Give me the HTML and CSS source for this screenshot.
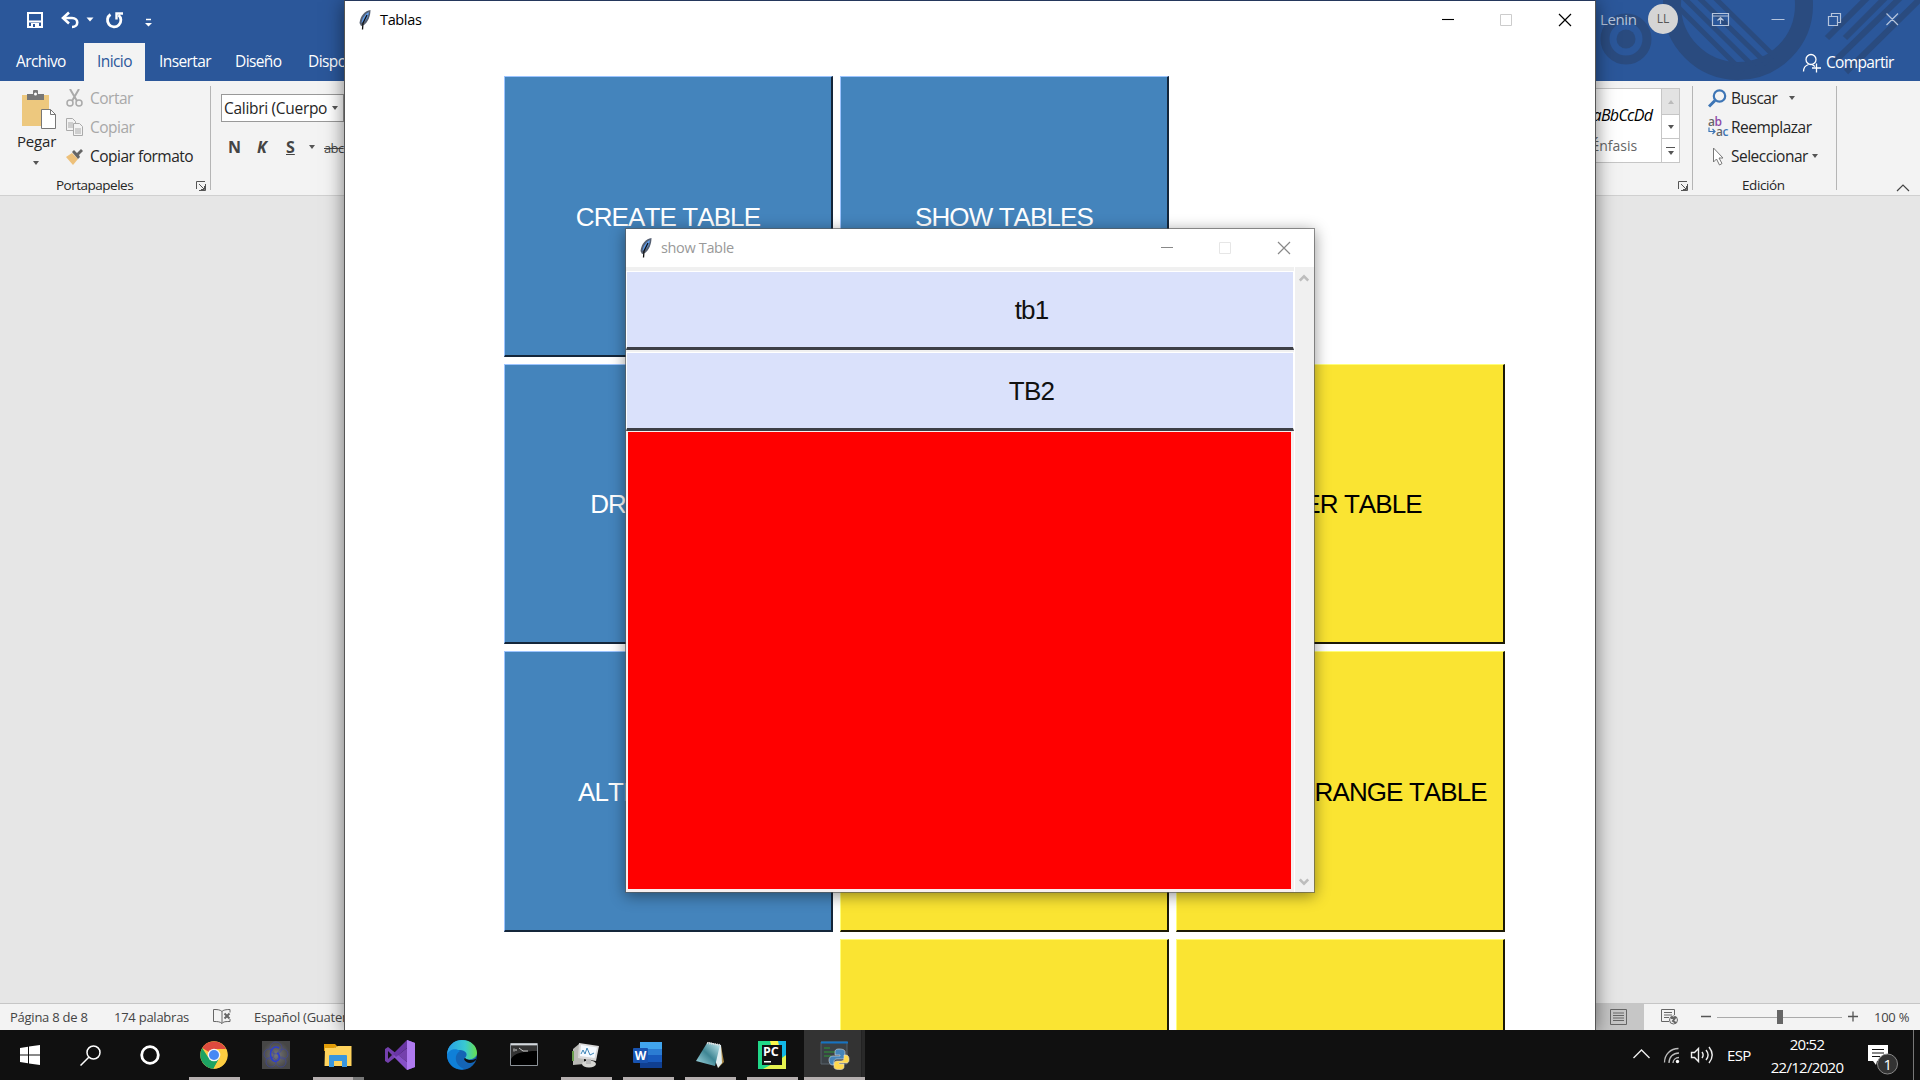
FILE: index.html
```html
<!DOCTYPE html>
<html lang="es">
<head>
<meta charset="utf-8">
<title>Tablas</title>
<link rel="stylesheet" href="styles.css">
</head>
<body>
<svg width="0" height="0" class="defs">
  <symbol id="feather" viewBox="0 0 12 20"><path d="M11.500 0C6 1 1.500 5 .500 13l1.500 3 3-1C9 12 11.500 6 11.500 0z" fill="#566072"/><path d="M10 2C6 4 3 8 2.500 13l2.500-1c3-3 4.500-6 5-10z" fill="#5f9be8"/><path d="M8 5L4 13l-.5 6.500" stroke="#111" stroke-width="1.300" fill="none"/></symbol>
  <symbol id="launch" viewBox="0 0 10 10"><path d="M.5 8V.5H9M3 3l5 5M9.500 3v6.500H3M8.500 5v3.500H5" fill="none" stroke="#555"/></symbol>
</svg>
<main class="desktop">
  <section class="word">
    <svg class="art" viewBox="0 0 340 81" width="340" height="81">
      <g fill="none" stroke="#2a4b7f">
        <circle cx="46" cy="39" r="21" stroke-width="9"/><circle cx="46" cy="39" r="9.500" fill="#2a4b7f" stroke="none"/>
        <circle cx="158" cy="5" r="66" stroke-width="18"/>
        <path d="M96 5l67 67M102-4l77 76M117-4l70 68M133-4l62 61" stroke-width="5"/>
        <path d="M247 38l42-42M265 38l42-42M254 62l68-66M266 72l77-76" stroke-width="6"/>
      </g>
    </svg>
    <header class="titlebar">
      <svg class="qat" width="160" height="38" viewBox="0 0 160 38" fill="none" stroke="#fff">
        <path d="M28 13h14v14H28z" stroke-width="2"/><path d="M29 21.500h12" stroke-width="2"/><path d="M31 23h8v5h-8z" fill="#fff" stroke="none"/><path d="M33 24h2v3h-2z" fill="#2b579a" stroke="none"/>
        <path d="M63 18h9c7 0 7 9 0 9" stroke-width="2.600"/><path d="M69 12.500L63 18l6 5.500" stroke-width="2.600"/>
        <path d="M86.500 17.500h7l-3.500 4zM145 23h7l-3.500 3.500z" fill="#fff" stroke="none"/>
        <path d="M110.500 14.500a6.700 6.700 0 1 0 8 .5" stroke-width="2.800"/><path d="M123 13.500h-6.500v6" stroke-width="2.400"/>
        <path d="M146 19.500h5" stroke-width="1.500"/>
      </svg>
      <div class="account"><span class="user">Lenin</span><span class="avatar">LL</span></div>
      <svg class="caption" width="210" height="38" viewBox="0 0 210 38" fill="none" stroke="#b5c4dc" stroke-width="1.200">
        <path d="M1.500 13.500h16v12h-16zM1.500 16h16M9.500 24v-6M6.500 20.500l3-3 3 3M60.500 19.500h13M117.500 16.500h9v9h-9zM120.500 16v-2.500h9v9H127M175.500 13.500l11.500 11.500M187 13.500l-11.500 11.500"/>
      </svg>
    </header>
    <nav class="tabs">
      <span class="tab t-file">Archivo</span><span class="tab t-home">Inicio</span><span class="tab t-ins">Insertar</span><span class="tab t-des">Diseño</span><span class="tab t-lay">Disposición</span>
      <span class="share"><svg width="20" height="20" viewBox="0 0 20 20" fill="none" stroke="#fff" stroke-width="1.300"><circle cx="9" cy="6.500" r="5"/><path d="M1.500 18.500c0-4 2-6 5-7M10 11.500l3 2M14.500 10.500v9M10 15h9"/></svg><b>Compartir</b></span>
    </nav>
    <div class="ribbon">
      <div class="group clip">
        <div class="clip-body">
          <div class="paste">
            <svg width="36" height="40" viewBox="0 0 36 40"><path d="M1 5h27v31H1z" fill="#edc87e"/><path d="M6 4h6V1q0-1 1-1h3q1 0 1 1v3h6v6H6z" fill="#777"/><circle cx="14.500" cy="4" r="1.500" fill="#fff"/><path d="M20.500 19.500h9l5 5v14h-14z" fill="#fff" stroke="#777"/><path d="M29.500 19.500v5h5" fill="none" stroke="#777"/></svg>
            <span>Pegar</span><i class="down"></i>
          </div>
          <div class="clip-list">
            <div class="cmd off"><svg width="17" height="18" viewBox="0 0 17 18" fill="none" stroke="#aaa"><path d="M4 0l7 12M13 0L6 12" stroke-width="2"/><circle cx="4" cy="14" r="3" stroke-width="1.500"/><circle cx="13" cy="14" r="3" stroke-width="1.500"/></svg><span class="w-cut">Cortar</span></div>
            <div class="cmd off"><svg width="17" height="18" viewBox="0 0 17 18" fill="#f3f3f3" stroke="#aaa"><path d="M.5.500h6l3 3v9h-9zM2 5h5M2 7h5M2 9h5"/><path d="M7.500 5.500h6l3 3v9h-9zM9 11h6M9 13h6M9 15h6"/></svg><span class="w-copy">Copiar</span></div>
            <div class="cmd"><svg width="17" height="17" viewBox="0 0 17 17"><path d="M0 9l6-4 6 6-5 6z" fill="#edc07a"/><path d="M6 4l2-2 3 3 4-4 2 2-4 4 1 2-2 2z" fill="#666"/></svg><span class="w-fmt">Copiar formato</span></div>
          </div>
        </div>
        <div class="caption-row"><span class="w-clip">Portapapeles</span><svg width="10" height="10"><use href="#launch"/></svg></div>
      </div>
      <div class="group font">
        <div class="combo"><span>Calibri (Cuerpo</span><i class="down"></i></div>
        <div class="styles"><b>N</b><b><em>K</em></b><b class="ul">S</b><i class="down"></i><s>abc</s></div>
      </div>
      <div class="group gallery">
        <div class="gal">
          <div class="sample"><em>AaBbCcDd</em><span>Énfasis</span></div>
          <div class="steps"><span class="dim"><i class="up"></i></span><span><i class="down"></i></span><span class="more"><i class="down"></i></span></div>
        </div>
        <svg class="launcher" width="10" height="10"><use href="#launch"/></svg>
      </div>
      <div class="group edit">
        <div class="cmd"><svg width="19" height="19" viewBox="0 0 19 19" fill="none" stroke="#3d75b5"><circle cx="11.500" cy="7" r="5.700" stroke-width="2.200"/><path d="M7 11.500L1 17.500" stroke-width="3"/></svg><span class="w-find">Buscar</span><i class="down far"></i></div>
        <div class="cmd"><svg class="abac" width="19" height="19" viewBox="0 0 19 19"><text x="0" y="8">a<tspan fill="#8e4ba8">b</tspan></text><text x="8" y="17.500">a<tspan fill="#3d75b5">c</tspan></text><path d="M1 9.500v4h6M4.500 11l2.500 2.500L4.500 16" fill="none" stroke="#3d75b5" stroke-width="1.200"/></svg><span class="w-rep">Reemplazar</span></div>
        <div class="cmd"><svg width="19" height="19" viewBox="0 0 19 19"><path d="M5.500 1v14l3-3 3 6 2.500-1.500-3-5.500h4z" fill="#fff" stroke="#777"/></svg><span class="w-sel">Seleccionar</span><i class="down"></i></div>
        <div class="edit-label">Edición</div>
      </div>
      <svg class="collapse" width="14" height="8" viewBox="0 0 14 8"><path d="M1 7l6-6 6 6" fill="none" stroke="#444" stroke-width="1.200"/></svg>
    </div>
    <div class="document"></div>
    <footer class="status">
      <span class="s-page">Página 8 de 8</span><span class="s-words">174 palabras</span>
      <svg width="18" height="16" viewBox="0 0 18 16" fill="none" stroke="#666"><path d="M9 2.500C7 .500 4 .500.500.500v12c4 0 6.500 0 8.500 2zM9 2.500c1-1.500 4-2 8-2v3M17 10v2.500c-4 0-7 0-8 2"/><path d="M11.500 4.500l5 5M16.500 4.500l-5 5" stroke-width="2"/></svg>
      <span class="s-lang">Español (Guatemala)</span>
      <div class="views">
        <span class="view-on"><svg width="17" height="16" viewBox="0 0 17 16" fill="none" stroke="#666"><path d="M.5.500h16v15H.500zM3 4h11M3 6.500h11M3 9h11M3 11.500h11"/></svg></span>
        <svg class="web" width="18" height="17" viewBox="0 0 18 17" fill="none" stroke="#666"><path d="M8 12.500H.500V.500h13V6M3 3.500h8M3 6h8M3 8.500h5"/><circle cx="12.500" cy="11" r="4" fill="#eee"/><path d="M10 9l4 0-2 3 3 2" stroke-width="2"/></svg>
        <svg class="zoom" width="160" height="16" viewBox="0 0 160 16" stroke="#555"><path d="M0 7.500h10M147 7.500h10M152 2.500v10" stroke-width="1.300"/><path d="M16 8.500h125" stroke="#aaa"/><path d="M76 1h6v14h-6z" fill="#666" stroke="none"/></svg>
        <span class="s-zoom">100 %</span>
      </div>
    </footer>
  </section>

  <section class="window tablas">
    <header class="wt"><svg width="12" height="20"><use href="#feather"/></svg><span class="w-tab">Tablas</span>
      <svg class="wc" width="130" height="14" viewBox="0 0 130 14" fill="none" stroke="#000"><path d="M0 6.500h12" stroke-width="1.100"/><path d="M58.500 1.500h11v11h-11z" stroke="#ccc"/><path d="M117 1l12 12M129 1l-12 12" stroke-width="1.200"/></svg>
    </header>
    <div class="grid">
      <div class="tk blue">CREATE TABLE</div><div class="tk blue">SHOW TABLES</div><div></div>
      <div class="tk blue">DROP TABLE</div><div class="tk yellow"></div><div class="tk yellow">ALTER TABLE</div>
      <div class="tk blue">ALTER TABLES</div><div class="tk yellow"></div><div class="tk yellow">EXTRACT RANGE TABLE</div>
      <div></div><div class="tk yellow"></div><div class="tk yellow"></div>
    </div>
  </section>

  <section class="window show">
    <header class="wt"><svg width="12" height="20"><use href="#feather"/></svg><span class="w-show">show Table</span>
      <svg class="wc" width="130" height="14" viewBox="0 0 130 14" fill="none" stroke="#888"><path d="M0 6.500h12"/><path d="M58.500 1.500h11v11h-11z" stroke="#e6e6e6"/><path d="M117 1l12 12M129 1l-12 12" stroke-width="1.200"/></svg>
    </header>
    <div class="show-body">
      <div class="list"><div class="item">tb1</div><div class="item second">TB2</div><div class="canvas"></div></div>
      <div class="scroll"><svg width="10" height="8" viewBox="0 0 10 8"><path d="M.800 6.500L5 2.300l4.200 4.200" fill="none" stroke="#bdbdbd" stroke-width="2.500"/></svg><svg width="10" height="8" viewBox="0 0 10 8"><path d="M.800 1.500L5 5.700l4.200-4.200" fill="none" stroke="#bdbdbd" stroke-width="2.500"/></svg></div>
    </div>
  </section>

  <footer class="taskbar">
    <span class="sys"><svg width="20" height="20" viewBox="0 0 20 20" fill="#fff"><path d="M0 3l8-1.200v7.700H0zM9 1.600L20 0v9.500H9zM0 10.500h8v7.700L0 17zM9 10.500h11V20L9 18.400z"/></svg></span>
    <span class="sys"><svg width="21" height="21" viewBox="0 0 21 21" fill="none" stroke="#fff" stroke-width="1.500"><circle cx="13.500" cy="7.500" r="6.500"/><path d="M8.800 12.200L.500 20.500"/></svg></span>
    <span class="sys"><svg width="20" height="20" viewBox="0 0 20 20"><circle cx="10" cy="10" r="8.300" fill="none" stroke="#fff" stroke-width="2.800"/></svg></span>
    <div class="apps">
      <span class="app run"><svg width="28" height="28" viewBox="0 0 28 28"><circle cx="14" cy="14" r="13.700" fill="#fc4"/><path d="M14 14L2.200 7A13.700 13.700 0 0 1 26 8H14z" fill="#dd4b3e"/><path d="M2.200 7a13.700 13.700 0 0 0 11.300 20.700L19.500 17 14 14 8 16z" fill="#1da362"/><path d="M14 8h12a13.700 13.700 0 0 1-12.500 19.700L19.500 17z" fill="#fdcd41"/><circle cx="14" cy="14" r="6.300" fill="#f4f4f4"/><circle cx="14" cy="14" r="5" fill="#4688f4"/></svg></span>
      <span class="app"><svg width="28" height="28" viewBox="0 0 28 28"><defs><radialGradient id="gg"><stop offset="0" stop-color="#777"/><stop offset="1" stop-color="#464646"/></radialGradient></defs><path d="M0 0h28v28H0z" fill="url(#gg)"/><g fill="none" stroke="#3a44a8" stroke-width=".6"><circle cx="14" cy="7" r="6"/><circle cx="7" cy="13" r="5"/><circle cx="21" cy="13" r="5"/><circle cx="9" cy="21" r="5"/><circle cx="19" cy="21" r="5"/></g><path d="M17 7c-5-3-10 2-8 9 1 5 6 6 8 2 1-3 0-5-2-6" fill="none" stroke="#2d3ed0" stroke-width="1.500"/></svg></span>
      <span class="app run split"><svg width="28" height="24" viewBox="0 0 28 24"><path d="M0 1h11l3 3h-3v4H0z" fill="#e19c08"/><path d="M1 5h9l4-2h13.500v20H.500z" fill="#ffd35c"/><path d="M5 13q0-1 1-1h16q1 0 1 1v11h-5v-6h-8v6H5z" fill="#3a96dd"/></svg></span>
      <span class="app"><svg width="30" height="30" viewBox="0 0 30 30"><path d="M0 9l3-2 19 15V8L3 23l-3-2z" fill="#7440ad"/><path d="M22 0l8 3v24l-8 3L8 16l3-3 11 9z" fill="#8650c8"/><path d="M22 0v8L11 17l-3-3z" fill="#6a36a5"/><path d="M22 0l8 3v24l-8 3z" fill="#af7af0"/><path d="M3 11v8l4-4z" fill="#101010"/></svg></span>
      <span class="app"><svg width="30" height="30" viewBox="0 0 30 30"><defs><linearGradient id="eg"><stop stop-color="#279ee8"/><stop offset=".6" stop-color="#39c9d2"/><stop offset="1" stop-color="#67df4d"/></linearGradient></defs><circle cx="15" cy="15" r="15" fill="#1464b5"/><path d="M0 15C0 6 7 0 15 0c9 0 15 6 15 13 0 6-9 8-12 5 4-4 0-8-5-8-7 0-12 3-13 5z" fill="url(#eg)"/><path d="M0 15c2-6 9-7 13-4-7 4-5 15 4 18C7 31 0 23 0 15z" fill="#0f80d8"/><path d="M18 18c3 3 8 2 10.500 1L30 16l-1 4c-4 5-11 3-12-1z" fill="#101010"/></svg></span>
      <span class="app"><svg width="28" height="23" viewBox="0 0 28 23"><path d="M.5.500h27v22H.500z" fill="#000" stroke="#8c9298"/><path d="M1 1.500h26" stroke="#d4d8dc" stroke-width="2"/><path d="M1 3h26v5C14 8 4 10 1 16z" fill="#333"/><path d="M4 5.500v3M6 6v2M9 5l4 3h5" stroke="#ccc" fill="none"/></svg></span>
      <span class="app run"><svg width="28" height="26" viewBox="0 0 28 26"><path d="M1 7l6-5 5 1v19l-11 1z" fill="#b9b9b5"/><path d="M0 9h2v10H0z" fill="#6a9e4c"/><path d="M7 1l20 3-3 15L6 16z" fill="#d9d9d9"/><path d="M9 3l16 2.500L22.500 16 8 14z" fill="#f5faff"/><path d="M9 12l2-4 2 4 2-6 3 7 4-2" fill="none" stroke="#3e86b8"/><ellipse cx="17" cy="22" rx="7" ry="3.500" fill="#d7d7d3"/><path d="M14 17h5v5h-5z" fill="#bbb"/></svg></span>
      <span class="app run"><svg width="30" height="28" viewBox="0 0 30 28"><path d="M7 1h22v7H7z" fill="#41a5ee"/><path d="M7 8h22v6H7z" fill="#2b7cd3"/><path d="M7 14h22v7H7z" fill="#185abd"/><path d="M7 21h22v6H7z" fill="#103f91"/><rect y="7" width="15" height="15" rx="1" fill="#1853b0"/><text x="1.700" y="18.500" class="wglyph">W</text></svg></span>
      <span class="app run"><svg width="28" height="28" viewBox="0 0 28 28"><defs><linearGradient id="ng" x1="0" y1="1" x2="1" y2="0"><stop stop-color="#a8dde6"/><stop offset=".5" stop-color="#3f8694"/><stop offset="1" stop-color="#c8edf2"/></linearGradient></defs><path d="M25 5l3 16-6 6z" fill="#a98845"/><path d="M12 1l13 3 1 18-4 5z" fill="#e1eef0"/><path d="M11 2l13 2-5 21L0 20z" fill="url(#ng)"/><path d="M11 2l13 2" stroke="#ddd" stroke-width="2" stroke-dasharray="1 1"/></svg></span>
      <span class="app run"><svg width="28" height="28" viewBox="0 0 28 28"><path d="M0 0h28v28H0z" fill="#21d789"/><path d="M12 0h16v14L14 8z" fill="#fcf84a"/><path d="M20 0h8v18l-5-4z" fill="#12b8e8"/><path d="M28 14v14H5l15-8z" fill="#e6f34f"/><path d="M4 4h20v20H4z" fill="#111"/><path d="M6 20h7v1.500H6z" fill="#fff"/><text x="5" y="15" class="pcglyph">PC</text></svg></span>
      <span class="app run active"><svg width="30" height="30" viewBox="0 0 30 30"><path d="M1 2h26v22H1z" fill="#3b4146" stroke="#58636b"/><path d="M1 2.500h27" stroke="#1573c2" stroke-width="2"/><path d="M4 8h6M4 12h11M4 16h7" stroke="#2f9a35"/><path d="M19 9c-4 0-4 2-4 3v3h5v1h-7c-3 0-4 2-4 4s1 5 3 5h2v-3c0-2 1-3 3-3h5c2 0 3-1 3-3v-4c0-2-2-3-6-3z" fill="#4584b9" stroke="#ddd" stroke-width=".6"/><path d="M20 29.500c4 0 4-2 4-3V24h-5v-1h7c3 0 3-2 3-4s-1-4-3-4h-2v3c0 2-1 3-3 3h-4c-2 0-3 1-3 3v3c0 2 2 2.500 6 2.500z" fill="#ffd94d" stroke="#ddd" stroke-width=".6"/></svg></span>
    </div>
    <div class="tray">
      <svg width="90" height="20" viewBox="0 0 90 20" fill="none" stroke="#eee" stroke-width="1.400"><path d="M.500 13l8-8 8 8"/><path d="M31.500 17.500c0-8 6-14 14-14M36 18c0-6 4-10 10-10M40 18c0-3 2.500-5.500 6-5.500" stroke="#bbb" stroke-width="1.300"/><circle cx="44.500" cy="16.500" r="1.700" fill="#fff" stroke="none"/><path d="M58.500 7.500h3l4-4v13l-4-4h-3zM69 7c1.500 2 1.500 4 0 6M73 5c2.500 3 2.500 7 0 10M76 2c4 5 4 11 0 16"/></svg>
      <span class="esp">ESP</span>
      <div class="clock"><span>20:52</span><span class="date">22/12/2020</span></div>
      <svg class="note" width="32" height="32" viewBox="0 0 32 32"><path d="M0 1h20v16H9l-1 4-3-4H0z" fill="#fff"/><path d="M4 5.500h12M4 9h12M4 12.500h8" stroke="#101010"/><circle cx="19.500" cy="20" r="10" fill="#333" stroke="#888"/><text x="15.500" y="25.500" class="badge">1</text></svg>
      <i class="peek"></i>
    </div>
  </footer>
</main>
</body>
</html>
```
FILE: styles.css
```css
*{box-sizing:border-box}
body{margin:0;overflow:hidden;font-family:"Open Sans","Noto Sans",sans-serif;font-size:14px;color:#262626}
.defs{position:absolute}
svg{display:block;flex:none}
span,b{white-space:nowrap}
.desktop{position:relative;width:1920px;height:1080px;overflow:hidden;display:flex;flex-direction:column}

/* Word */
.word{position:relative;width:1920px;height:1030px;display:flex;flex-direction:column;background:linear-gradient(#2b579a 81px,#e6e6e6 81px)}
.art{position:absolute;right:0;top:0}
.titlebar{height:43px;display:flex}
.titlebar>*,.tabs>*{position:relative}
.account{margin-left:auto;width:111px;display:flex;align-items:center;justify-content:space-between;height:38px;padding-right:33px}
.caption{margin-right:-1px}
.user{color:#b5c4dc;font-size:15px;letter-spacing:-.4px}
.avatar{width:30px;height:30px;border-radius:50%;background:#d5d5d5;color:#555;font-size:12px;line-height:30px;text-align:center}
.tabs{height:38px;display:flex;color:#fff;font-size:15.500px;line-height:37px}
.tab{letter-spacing:-.6px}
.t-file{width:84px;padding-left:16px}
.t-home{width:61px;background:#f3f3f3;color:#2b579a;text-align:center}
.t-ins{width:90px;padding-left:14px}
.t-des{width:73px}
.share{margin-left:auto;width:118px;display:flex;gap:4px;padding-top:1px}
.share svg{margin-top:9px}
.share b{font-weight:400;letter-spacing:-.65px}
.ribbon{height:115px;background:#f3f3f3;border-bottom:1px solid #d0d0d0;display:flex;padding-top:5px}
.group{height:104px;flex:none}
.clip{width:211px;border-right:1px solid #b5b5b5}
.clip-body{display:flex;height:90px}
.paste{width:66px;padding:4px 0 0 21px;display:flex;flex-direction:column}
.paste span{margin:-1px 0 0 -4px;line-height:24px;font-size:15px;letter-spacing:-.2px}
.paste .down{margin:8px 0 0 12px}
.down{width:0;height:0;border:3.500px solid transparent;border-top:4px solid #555;border-bottom:0}
.up{width:0;height:0;border:3.500px solid transparent;border-bottom:4px solid #bbb;border-top:0}
.cmd{height:29px;display:flex;align-items:center;gap:6px;font-size:15.500px;line-height:24px;letter-spacing:-.5px}
.clip-list .cmd{padding-bottom:5px;gap:7px}
.off{color:#a8a8a8}
.caption-row{display:flex;font-size:13.500px;line-height:18px;padding-left:56px;justify-content:space-between;padding-right:4px}
.caption-row svg{margin-top:5px}
.caption-row span{letter-spacing:-.5px}
.font{padding:8px 0 0 10px;width:200px}
.combo{width:123px;height:28px;border:1px solid #999;background:#fff;display:flex;align-items:center;font-size:15.500px;padding-left:2px;gap:5px}
.combo span{width:103px;letter-spacing:-.3px}
.styles{display:flex;align-items:center;height:38px;padding:11px 0 0 7px;font-size:16px;color:#444}
.styles b{width:29px}
.styles .ul{width:23px;text-decoration:underline}
.styles s{font-size:13px;margin:2px 0 0 9px;letter-spacing:-.6px}
.gallery{margin-left:auto;width:114px;border-right:1px solid #b5b5b5}
.gal{display:flex;height:75px;margin:2px 12px 0 0;border:1px solid #c6c6c6;background:#fff}
.sample{width:82px;display:flex;flex-direction:column;align-items:flex-end;padding:12px 9px 0 0;line-height:28px}
.sample em{font-size:16px;color:#000;letter-spacing:-.7px}
.sample span{margin:3px 15px 0 0;color:#666}
.steps{width:18px;border-left:1px solid #c6c6c6;display:grid;grid-template-rows:26px 24px 23px}
.steps span{display:flex;align-items:center;justify-content:center;border-bottom:1px solid #c6c6c6}
.steps .dim{background:#e3e3e3}
.steps .more{border:0;flex-direction:column;gap:3px}
.more::before{content:"";width:9px;height:1px;background:#555}
.launcher{margin:18px 0 0 99px}
.edit{width:144px;border-right:1px solid #b5b5b5;padding-left:15px}
.edit .cmd{gap:4px;padding-bottom:5px}
.edit .far{margin-left:8px}
.abac{font:600 12px "Open Sans",sans-serif;fill:#666;overflow:visible}
.edit-label{font-size:13.500px;line-height:18px;padding:3px 0 0 34px;letter-spacing:-.4px}
.collapse{margin:98px 10px 0 59px}
.document{flex:1}
.status{height:27px;background:#f3f3f3;border-top:1px solid #c6c6c6;display:flex;align-items:center;font-size:13px;color:#444;padding-left:10px;letter-spacing:-.25px}
.s-page{width:104px}.s-words{width:99px}.s-lang{margin-left:23px}
.views{margin-left:auto;width:335px;height:26px;display:flex;align-items:center}
.view-on{width:59px;height:26px;background:#c6c6c6;padding:5px 0 0 25px}
.web{margin-left:17px}.zoom{margin-left:22px}.s-zoom{margin-left:13px}

/* Tk windows */
.window{position:absolute;background:#fff;display:flex;flex-direction:column}
.tablas{left:344px;top:0;width:1252px;height:1030px;border:1px solid #24375c;border-width:1px 1px 0;box-shadow:0 2px 18px rgba(0,0,0,.5);border-color:#24375c #555 #555;clip-path:inset(0 -40px 0 -40px)}
.wt{height:38px;display:flex;align-items:center;gap:9px;padding-left:14px;font-size:14.500px;color:#000;flex:none}
.tablas .wt{padding-bottom:1px}
.wt span{letter-spacing:-.35px}
.wc{margin-left:auto}
.tablas .wc{margin-right:23px}
.grid{display:grid;grid-template-columns:repeat(3,329px);grid-template-rows:281px 280px 281px 281px;gap:7px;padding:37px 0 0 159px;height:991px;overflow:hidden}
.tk{display:flex;align-items:center;justify-content:center;font:26px "Liberation Sans",Arial,sans-serif;letter-spacing:-.9px;font-kerning:none;white-space:nowrap;border-style:solid;border-width:1px 2px 2px 1px;padding-top:2px}
.blue{background:#4484bc;color:#fff;border-color:#9cc4ff #14263a #14263a #9cc4ff}
.yellow{background:#fae432;color:#000;border-color:#ffff78 #1c1a06 #1c1a06 #ffff78}
.show{left:625px;top:228px;width:690px;height:665px;border:1px solid rgba(90,90,90,.65);background-clip:padding-box;box-shadow:0 3px 14px rgba(0,0,0,.42)}
.show .wt{color:#999;padding-bottom:1px}
.show .wc{margin:1px 23px 0 auto}
.show-body{display:flex;flex:1;background:#f0f0f0}
.list{width:668px;padding-top:4px;display:flex;flex-direction:column;background:#f0f0f0}
.item{height:79px;background:#dae1fb;border:solid #fff;border-width:1px 1px 3px;border-bottom-color:#3d3f46;display:flex;align-items:center;justify-content:center;padding:2px 0 0 143px;font:26px "Liberation Sans",Arial,sans-serif;letter-spacing:-.8px;color:#111;font-kerning:none}
.second{margin-top:2px}
.canvas{flex:1;background:#f00;border:solid #f7efef;border-width:1px 3px 3px 2px}
.scroll{width:20px;border-left:1px solid #fff;display:flex;flex-direction:column;justify-content:space-between;align-items:center;padding:7px 1px 6px 0}

/* Taskbar */
.taskbar{height:50px;background:#101010;display:flex;color:#fff}
.sys{width:60px;display:flex;align-items:center;justify-content:center}
.apps{display:flex;margin-left:3px}
.app{width:62px;height:50px;display:flex;align-items:center;justify-content:center;position:relative}
.app svg{margin-top:-1px}
.run::after{content:"";position:absolute;left:6px;bottom:0;width:51px;height:3px;background:#b5afaf}
.split::after{background:linear-gradient(90deg,#b5afaf 40px,#777 40px)}
.active{background:linear-gradient(90deg,#333 57px,#1b1b1b 57px,#292929 58px);width:61px;margin-left:1px}
.active::after{left:0;width:61px}
.wglyph{font:bold 12px "Open Sans",sans-serif;fill:#fff}
.pcglyph{font:bold 12.500px "Open Sans",sans-serif;fill:#fff}
.tray{margin-left:auto;width:287px;display:flex;align-items:center}
.esp{width:38px;margin-left:4px;font-size:15px;letter-spacing:-.7px}
.clock{width:84px;margin-top:1px;display:flex;flex-direction:column;align-items:center;line-height:23px;font-size:15px;letter-spacing:-.7px}
.note{margin:10px 0 0 19px}
.badge{font:15px "Open Sans",sans-serif;fill:#fff}
.peek{width:1px;height:50px;background:#777;margin-left:13px}
```
